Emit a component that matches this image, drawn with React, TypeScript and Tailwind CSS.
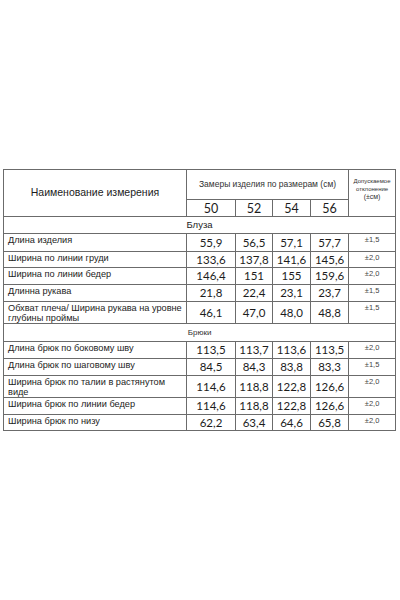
const blouse = [
  { name: 'Длина изделия', v: ['55,9', '56,5', '57,1', '57,7'], tol: '±1,5', h: 'h-[18px]' },
  { name: 'Ширина по линии груди', v: ['133,6', '137,8', '141,6', '145,6'], tol: '±2,0', h: 'h-[16px]' },
  { name: 'Ширина по линии бедер', v: ['146,4', '151', '155', '159,6'], tol: '±2,0', h: 'h-[17px]' },
  { name: 'Длинна рукава', v: ['21,8', '22,4', '23,1', '23,7'], tol: '±1,5', h: 'h-[17px]' },
  {
    name: 'Обхват плеча/ Ширина рукава на уровне глубины проймы',
    v: ['46,1', '47,0', '48,0', '48,8'],
    tol: '±1,5',
    h: 'h-[21px]',
  },
]

const pants = [
  { name: 'Длина брюк по боковому шву', v: ['113,5', '113,7', '113,6', '113,5'], tol: '±2,0', h: 'h-[17px]' },
  { name: 'Длина брюк по шаговому шву', v: ['84,5', '84,3', '83,8', '83,3'], tol: '±1,5', h: 'h-[17px]' },
  {
    name: 'Ширина брюк по талии в растянутом виде',
    v: ['114,6', '118,8', '122,8', '126,6'],
    tol: '±2,0',
    h: 'h-[21px]',
  },
  { name: 'Ширина брюк по линии бедер', v: ['114,6', '118,8', '122,8', '126,6'], tol: '±2,0', h: 'h-[17px]' },
  { name: 'Ширина брюк по низу', v: ['62,2', '63,4', '64,6', '65,8'], tol: '±2,0', h: 'h-[16px]' },
]

type Row = { name: string; v: string[]; tol: string; h: string }

const cell = 'border border-[#6b6b6b] p-0'

function DataRow({ row }: { row: Row }) {
  return (
    <tr className={row.h}>
      <td className={`${cell} pl-[4px] pr-1 pt-[1px] text-[9.2px] leading-[10px] align-top`}>{row.name}</td>
      {row.v.map((n, i) => (
        <td
          key={i}
          className={`${cell} text-center align-middle text-[11.5px] leading-[12px] font-['Lato',sans-serif]`}
        >
          {n}
        </td>
      ))}
      <td className={`${cell} text-center align-top pt-[2px] text-[7.5px] leading-[8px] text-[#444]`}>{row.tol}</td>
    </tr>
  )
}

export default function App() {
  return (
    <div className="min-h-[600px] bg-white pt-[169px] pl-[3px] font-['Liberation_Sans',Arial,sans-serif] text-[#1c1c1c]">
      <table className="table-fixed border-collapse w-[392px]">
        <colgroup>
          <col className="w-[183px]" />
          <col className="w-[49px]" />
          <col className="w-[37px]" />
          <col className="w-[38px]" />
          <col className="w-[38px]" />
          <col className="w-[47px]" />
        </colgroup>
        <tbody>
          <tr className="h-[30px]">
            <td rowSpan={2} className={`${cell} text-center align-middle text-[10.5px]`}>
              Наименование измерения
            </td>
            <td colSpan={4} className={`${cell} text-center align-middle text-[8.5px] text-[#333]`}>
              Замеры изделия по размерам (см)
            </td>
            <td rowSpan={2} className={`${cell} text-center align-middle text-[6px] leading-[8px] text-[#333] pb-[8px]`}>
              Допускаемое
              <br />
              отклонение
              <br />
              <span className="text-[7px]">(±см)</span>
            </td>
          </tr>
          <tr className="h-[17px]">
            {['50', '52', '54', '56'].map((s) => (
              <td
                key={s}
                className={`${cell} text-center align-middle text-[12.5px] leading-[13px] font-['Lato',sans-serif]`}
              >
                {s}
              </td>
            ))}
          </tr>
          <tr className="h-[17px]">
            <td colSpan={6} className={`${cell} text-center text-[9.5px] leading-[10px] align-middle`}>
              Блуза
            </td>
          </tr>
          {blouse.map((r) => (
            <DataRow key={r.name} row={r} />
          ))}
          <tr className="h-[18px]">
            <td colSpan={6} className={`${cell} text-center text-[8px] leading-[8px] align-middle text-[#333]`}>
              Брюки
            </td>
          </tr>
          {pants.map((r) => (
            <DataRow key={r.name} row={r} />
          ))}
        </tbody>
      </table>
    </div>
  )
}
